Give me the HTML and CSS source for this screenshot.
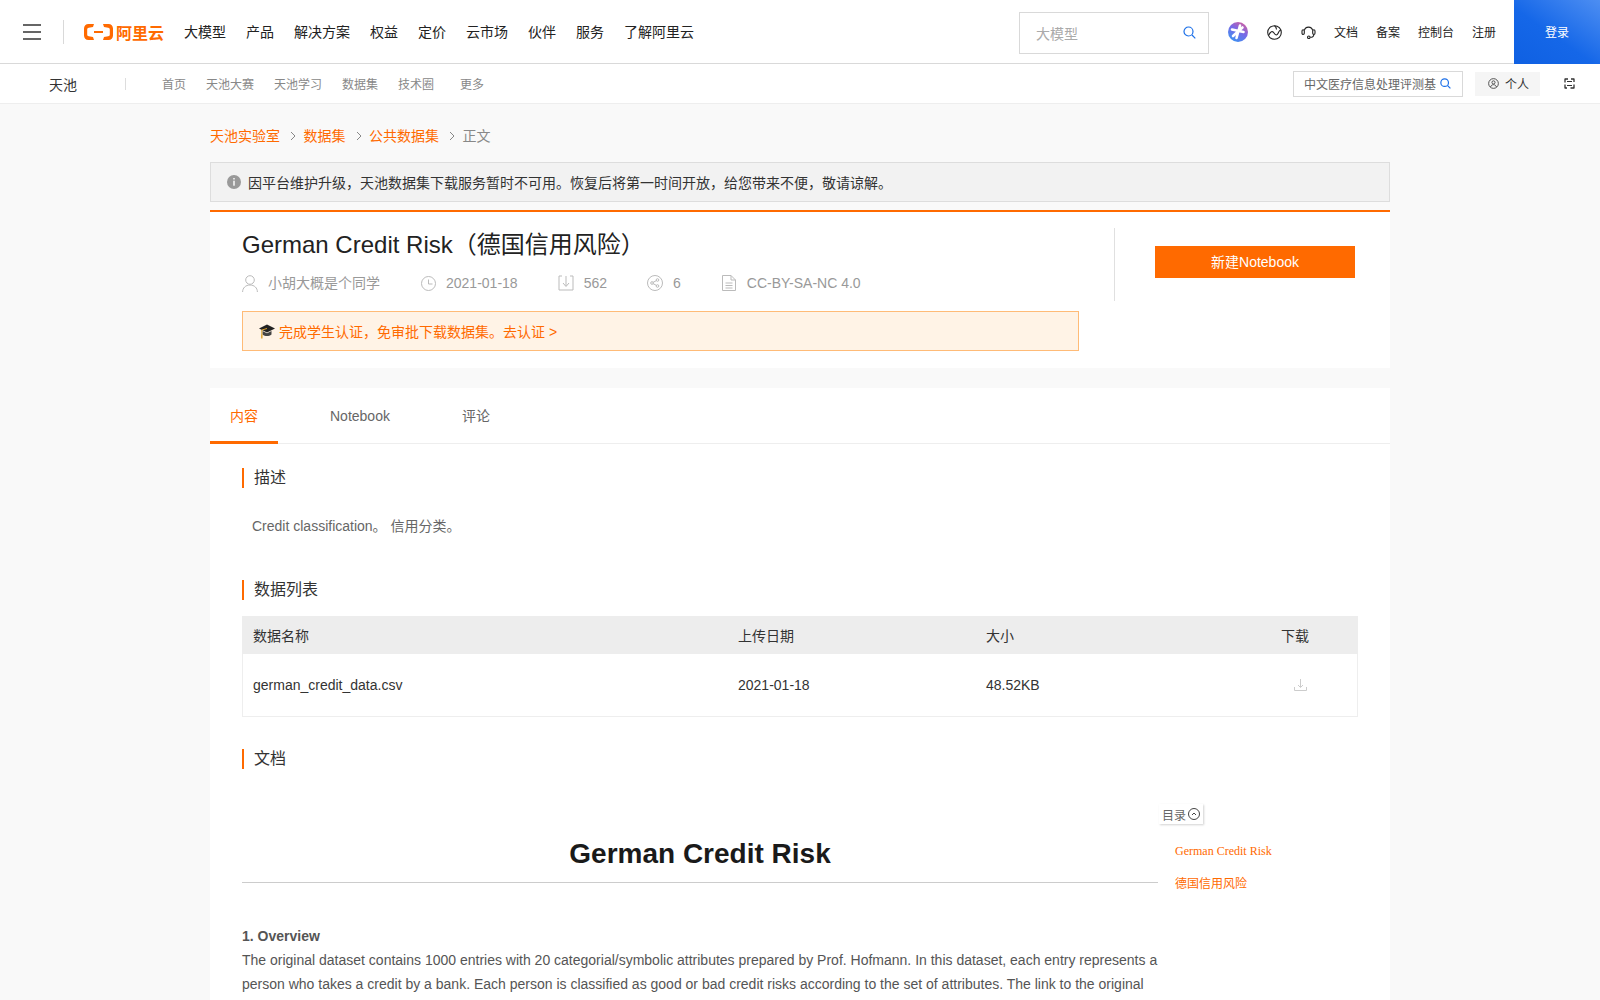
FILE: index.html
```html
<!DOCTYPE html>
<html lang="zh-CN">
<head>
<meta charset="utf-8">
<title>German Credit Risk（德国信用风险）</title>
<link rel="stylesheet" href="styles.css">
</head>
<body>
<header class="topbar">
  <div class="burger"><i></i><i></i><i></i></div>
  <span class="topdiv"></span>
  <a class="logo">
    <svg width="29" height="16" viewBox="0 0 29 16"><path d="M10 0H4.500C1.800 0 0 1.800 0 4.500V11.500C0 14.200 1.800 16 4.500 16H10L9 13 4.800 12.300C3.800 12.100 3.200 11.500 3.200 10.500V5.500C3.200 4.500 3.800 3.900 4.800 3.700L9 3ZM19 0H24.500C27.200 0 29 1.800 29 4.500V11.500C29 14.200 27.200 16 24.500 16H19L20 13 24.200 12.300C25.200 12.100 25.800 11.500 25.800 10.500V5.500C25.800 4.500 25.200 3.900 24.200 3.700L20 3ZM10 7H19V9H10Z" fill="#ff6a00"/></svg>
    <span>阿里云</span>
  </a>
  <nav class="mainnav">
    <a>大模型</a><a>产品</a><a>解决方案</a><a>权益</a><a>定价</a><a>云市场</a><a>伙伴</a><a>服务</a><a>了解阿里云</a>
  </nav>
  <div class="topright">
    <div class="topsearch">
      <span>大模型</span>
      <svg width="13" height="13" viewBox="0 0 13 13" fill="none" stroke="#1b6fe8" stroke-width="1.200"><circle cx="5.500" cy="5.500" r="4.500"/><path d="M9 9l3.300 3.300"/></svg>
    </div>
    <svg class="ai" width="20" height="20" viewBox="0 0 20 20"><defs><linearGradient id="aig" x1="0.850" y1="0" x2="0.250" y2="1"><stop offset="0" stop-color="#d9609a"/><stop offset="0.450" stop-color="#7a68e6"/><stop offset="1" stop-color="#3a93f2"/></linearGradient></defs><circle cx="10" cy="10" r="10" fill="url(#aig)"/><path d="M12 3.500L8.500 16M4 7.500l11.500 2.500M5 14l9.500-8.500" stroke="#fff" stroke-width="2.600" stroke-linecap="round"/></svg>
    <svg class="globe" width="15" height="15" viewBox="0 0 15 15" fill="none" stroke="#222" stroke-width="1.100"><circle cx="7.500" cy="7.500" r="6.800"/><path d="M1.500 10.500C3.500 6.500 5.500 5.500 7 8S10 10.500 11 8.500 12 5 14 5M7.500 .8C9 1.800 9.500 3 9.500 4.500"/></svg>
    <svg class="headset" width="15" height="14" viewBox="0 0 15 14" fill="none" stroke="#222" stroke-width="1.100"><path d="M3.300 5.500a4.300 4.300 0 0 1 8.400 0"/><rect x="1" y="4.800" width="2.300" height="4.600" rx="1.150"/><rect x="11.700" y="4.800" width="2.300" height="4.600" rx="1.150"/><path d="M12.800 9.400c0 1.800-1.500 2.900-3.500 2.900"/><circle cx="7.800" cy="12.300" r="1.300"/></svg>
    <a class="toplink first">文档</a><a class="toplink">备案</a><a class="toplink">控制台</a><a class="toplink">注册</a>
    <a class="login">登录</a>
  </div>
</header>

<div class="subbar">
  <a class="brand">天池</a>
  <span class="subdiv"></span>
  <nav class="subnav">
    <a>首页</a><a>天池大赛</a><a>天池学习</a><a>数据集</a><a>技术圈</a><a class="more">更多</a>
  </nav>
  <div class="subright">
    <div class="subsearch">
      <span>中文医疗信息处理评测基</span>
      <svg width="11" height="11" viewBox="0 0 13 13" fill="none" stroke="#1b6fe8" stroke-width="1.400"><circle cx="5.500" cy="5.500" r="4.500"/><path d="M9 9l3.300 3.300"/></svg>
    </div>
    <a class="personal">
      <svg width="11" height="11" viewBox="0 0 12 12" fill="none" stroke="#444" stroke-width="1"><circle cx="6" cy="6" r="5.300"/><circle cx="6" cy="4.800" r="1.700"/><path d="M2.800 9.800c.6-1.800 1.800-2.500 3.200-2.500s2.600.7 3.200 2.500"/></svg>
      <span>个人</span>
    </a>
    <svg class="swap" width="11" height="11" viewBox="0 0 11 11" fill="none" stroke="#333" stroke-width="1.300"><path d="M1 1h3M1 .5v4M10 1H7M10 .5V4M1 6.500V10.500M1 10h2M10 6.500V10.500M10 10H6.500"/><path d="M3 3.500h5M3 7.500h5" stroke-width="1"/></svg>
  </div>
</div>

<main class="page">
  <div class="crumbs">
    <a>天池实验室</a>
    <svg class="chev" width="6" height="10" viewBox="0 0 6 10" fill="none" stroke="#888" stroke-width="1"><path d="M1 1l4 4-4 4"/></svg>
    <a>数据集</a>
    <svg class="chev" width="6" height="10" viewBox="0 0 6 10" fill="none" stroke="#888" stroke-width="1"><path d="M1 1l4 4-4 4"/></svg>
    <a>公共数据集</a>
    <svg class="chev" width="6" height="10" viewBox="0 0 6 10" fill="none" stroke="#888" stroke-width="1"><path d="M1 1l4 4-4 4"/></svg>
    <span>正文</span>
  </div>

  <div class="notice">
    <svg width="14" height="14" viewBox="0 0 14 14"><circle cx="7" cy="7" r="7" fill="#999"/><rect x="6.300" y="3" width="1.400" height="1.500" fill="#fff"/><rect x="6.300" y="5.700" width="1.400" height="5" fill="#fff"/></svg>
    <span>因平台维护升级，天池数据集下载服务暂时不可用。恢复后将第一时间开放，给您带来不便，敬请谅解。</span>
  </div>

  <section class="hero">
    <div class="hero-main">
      <h1 class="title">German Credit Risk（德国信用风险）</h1>
      <div class="meta">
        <span class="mi m1"><svg width="16" height="17" viewBox="0 0 16 17" fill="none" stroke="#bbb"><circle cx="8" cy="5" r="4.300"/><path d="M.6 17c0-4 3-7 7.400-7s7.400 3 7.400 7"/></svg>小胡大概是个同学</span>
        <span class="mi m2"><svg width="15" height="15" viewBox="0 0 15 15" fill="none" stroke="#bbb"><circle cx="7.500" cy="7.500" r="7"/><path d="M7.500 3.500v4.500h4"/></svg>2021-01-18</span>
        <span class="mi m3"><svg width="16" height="16" viewBox="0 0 16 16" fill="none" stroke="#bbb"><path d="M4 1H1v14h14V1h-3M8 1v10M5 8l3 3.500L11 8"/></svg>562</span>
        <span class="mi m4"><svg width="16" height="16" viewBox="0 0 16 16" fill="none" stroke="#bbb"><circle cx="8" cy="8" r="7.500"/><circle cx="5" cy="8" r="1.300"/><circle cx="10.500" cy="5" r="1.300"/><circle cx="10.500" cy="11" r="1.300"/><path d="M6 7.400l3.400-1.800M6 8.600l3.400 1.800"/></svg>6</span>
        <span class="mi m5"><svg width="14" height="16" viewBox="0 0 14 16" fill="none" stroke="#bbb"><path d="M.5.500h8.500l4.500 4.500v10.500H.5zM9 .5V5h4.500M3.500 8h7M3.500 10.500h7M3.500 13h7"/></svg>CC-BY-SA-NC 4.0</span>
      </div>
      <div class="student">
        <svg width="16" height="15" viewBox="0 0 16 15"><path d="M8 .5L0 4.500l8 4 8-4z" fill="#222"/><path d="M3.500 7v3.500c1.300 1 3 1.500 4.500 1.500s3.200-.5 4.500-1.500V7L8 9.300z" fill="#444"/><path d="M8 4.500L2.800 6v5" fill="none" stroke="#d9a02e" stroke-width="1"/><rect x="2" y="10.500" width="1.600" height="4" fill="#e2a93a"/></svg>
        <a>完成学生认证，免审批下载数据集。去认证 &gt;</a>
      </div>
    </div>
    <div class="hero-side">
      <a class="newbtn">新建Notebook</a>
    </div>
  </section>

  <section class="content">
    <div class="tabs">
      <a class="tab active">内容</a><a class="tab">Notebook</a><a class="tab">评论</a>
    </div>
    <div class="body">
      <h2 class="sect first">描述</h2>
      <p class="desc">Credit classification。 信用分类。</p>

      <h2 class="sect second">数据列表</h2>
      <div class="table">
        <div class="row head"><span>数据名称</span><span>上传日期</span><span>大小</span><span>下载</span></div>
        <div class="row item"><span>german_credit_data.csv</span><span>2021-01-18</span><span>48.52KB</span>
          <span class="dl"><svg width="13" height="12" viewBox="0 0 13 12" fill="none" stroke="#ccc"><path d="M.5 8v3.500h12V8M6.500 0v8M4 6l2.500 2.500L9 6"/></svg></span>
        </div>
      </div>

      <h2 class="sect third">文档</h2>
      <div class="doc">
        <article class="markdown">
          <h1 class="doc-title">German Credit Risk</h1>
          <p class="overview"><strong>1. Overview</strong><br>The original dataset contains 1000 entries with 20 categorial/symbolic attributes prepared by Prof. Hofmann. In this dataset, each entry represents a person who takes a credit by a bank. Each person is classified as good or bad credit risks according to the set of attributes. The link to the original dataset can be found below.</p>
        </article>
        <aside class="toc">
          <div class="toc-btn"><span>目录</span><svg width="12" height="12" viewBox="0 0 12 12" fill="none" stroke="#444"><circle cx="6" cy="6" r="5.500"/><path d="M4 7l2-2 2 2"/></svg></div>
          <a class="toc-link a">German Credit Risk</a>
          <a class="toc-link b">德国信用风险</a>
        </aside>
      </div>
    </div>
  </section>
</main>
</body>
</html>
```
FILE: styles.css
```css
* { box-sizing: border-box; }
html, body { margin: 0; padding: 0; }
body {
  background: #f9f9f9;
  color: #333;
  font-family: "Liberation Sans", "Noto Sans CJK SC", sans-serif;
  font-size: 14px;
  overflow: hidden;
  height: 1000px;
}
a { color: inherit; text-decoration: none; }
svg { display: block; flex: none; }

/* top bar */
.topbar {
  height: 64px;
  background: #fff;
  border-bottom: 1px solid #d9d9d9;
  display: flex;
  align-items: center;
  padding-left: 23px;
}
.burger { width: 18px; height: 16px; display: flex; flex-direction: column; justify-content: space-between; }
.burger i { display: block; height: 2px; background: #666; }
.topdiv { width: 1px; height: 24px; background: #d9d9d9; margin-left: 22px; }
.logo { display: flex; align-items: center; gap: 3px; margin-left: 20px; color: #ff6a00; font-weight: 700; font-size: 16px; }
.mainnav { display: flex; gap: 20px; margin-left: 20px; color: #222; line-height: 20px; }
.topright { margin-left: auto; display: flex; align-items: center; height: 63px; }
.topsearch {
  width: 190px; height: 42px; margin-top: 2px;
  border: 1px solid #d9d9d9;
  display: flex; align-items: center; justify-content: space-between;
  padding: 0 12px 0 16px;
  color: #aaa;
}
.ai { margin-left: 19px; }
.globe { margin-left: 19px; margin-top: 1px; }
.headset { margin-left: 19px; }
.toplink { font-size: 12px; color: #222; margin-left: 18px; }
.toplink.first { margin-left: 18px; }
.login {
  width: 86px; height: 64px; margin-left: 18px;
  display: flex; align-items: center; justify-content: center;
  color: #fff; font-size: 12px;
  background: linear-gradient(215deg, #4d8ef2 0%, #1567e8 55%, #0f60e2 100%);
}

/* sub bar */
.subbar {
  height: 40px;
  background: #fff;
  border-bottom: 1px solid #eee;
  display: flex;
  align-items: center;
  padding-left: 49px;
}
.brand { color: #333; width: 76px; }
.subdiv { width: 1px; height: 12px; background: #ddd; }
.subnav { display: flex; gap: 20px; margin-left: 36px; font-size: 12px; color: #888; }
.subnav .more { margin-left: 6px; }
.subright { margin-left: auto; display: flex; align-items: center; padding-right: 25px; }
.subsearch {
  width: 170px; height: 26px;
  border: 1px solid #d9d9d9;
  display: flex; align-items: center; justify-content: space-between;
  padding: 0 11px 0 10px;
  color: #666; font-size: 12px;
}
.subsearch span { white-space: nowrap; overflow: hidden; }
.personal {
  width: 65px; height: 24px; margin-left: 12px;
  background: #f5f5f5; color: #333; font-size: 12px;
  display: flex; align-items: center; gap: 6px; padding-left: 13px;
}
.swap { margin-left: 24px; }

/* page */
.page { width: 1180px; margin: 0 auto; padding-top: 22px; }
.crumbs { display: flex; align-items: center; line-height: 20px; color: #ff6a00; }
.crumbs span { color: #888; }
.chev { margin: 0 7.500px 0 10px; }
.notice {
  height: 40px; margin-top: 16px;
  border: 1px solid #ddd; background: #f2f2f2;
  display: flex; align-items: center; gap: 7px; padding-left: 16px;
  color: #333;
}
.hero {
  margin-top: 8px;
  height: 158px;
  background: #fff;
  border-top: 2px solid #ff6a00;
  display: flex;
  align-items: flex-start;
}
.hero-main { width: 869px; padding: 17px 0 0 32px; }
.title { margin: 0; font-size: 24px; font-weight: 400; line-height: 32px; color: #222; }
.meta { display: flex; margin-top: 12px; line-height: 20px; color: #999; }
.mi { display: flex; align-items: center; }
.mi svg { margin-right: 10px; }
.m2 { margin-left: 41px; }
.m3 { margin-left: 40px; }
.m4 { margin-left: 40px; }
.m5 { margin-left: 41px; }
.m5 svg { margin-right: 11px; }
.student {
  margin-top: 18px;
  width: 837px; height: 40px;
  border: 1px solid #ffbb77;
  background: #fff3e6;
  color: #ff6a00;
  display: flex; align-items: center; gap: 4px;
  padding-left: 16px;
}
.hero-side {
  margin: 16px 0 0 35px;
  height: 73px;
  border-left: 1px solid #e0e0e0;
  padding: 18px 0 0 40px;
}
.newbtn {
  display: block; width: 200px; height: 32px; line-height: 32px;
  background: #ff6a00; color: #fff; text-align: center;
}

/* content */
.content { margin-top: 20px; background: #fff; }
.tabs { display: flex; gap: 32px; height: 56px; border-bottom: 1px solid #eee; }
.tab { height: 56px; line-height: 56px; padding: 0 20px; color: #666; }
.tab.active { color: #ff6a00; box-shadow: inset 0 -3px 0 #ff6a00; }
.body { padding: 0 32px 40px; }
.sect {
  margin: 0; font-size: 16px; font-weight: 400; line-height: 20px; color: #333;
  border-left: 2px solid #ff6a00; padding-left: 10px;
}
.sect.first { margin-top: 24px; }
.sect.second { margin-top: 42px; }
.sect.third { margin-top: 32px; }
.desc { margin: 26px 0 0; padding-left: 10px; line-height: 24px; color: #666; }
.table { margin-top: 16px; border: 1px solid #eee; border-top: 0; }
.row { display: grid; grid-template-columns: 485px 248px 295px 1fr; padding-left: 10px; align-items: center; }
.row.head { height: 38px; background: #ededed; color: #333; margin: 0 -1px; padding-left: 11px; }
.row.item { height: 62px; color: #333; }
.dl { padding-left: 13px; }
.doc { display: flex; align-items: flex-start; }
.markdown { width: 916px; color: #555; }
.doc-title {
  margin: 65px 0 0; padding-bottom: 8px;
  font-size: 28px; line-height: 40px; font-weight: 700; color: #1a1a1a; text-align: center;
  border-bottom: 1px solid #ccc;
}
.overview { margin: 41px 0 0; line-height: 24px; }
.toc { padding-top: 35px; margin-left: 1px; font-size: 12px; }
.toc-btn {
  width: 44px; height: 20px;
  display: flex; align-items: center; gap: 2px; padding-left: 3px;
  color: #666;
  box-shadow: 1px 1px 2px rgba(0,0,0,.18);
}
.toc-link { display: block; margin-left: 16px; color: #ff6a00; line-height: 16px; }
.toc-link.a { font-family: "Liberation Serif", "Noto Sans CJK SC", serif; margin-top: 19px; }
.toc-link.b { margin-top: 17px; }
```
